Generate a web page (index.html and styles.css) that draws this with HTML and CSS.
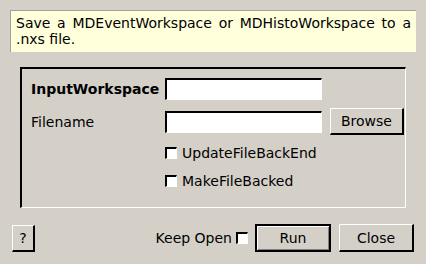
FILE: index.html
```html
<!DOCTYPE html>
<html lang="en">
<head>
  <meta charset="UTF-8">
  <title>SaveMD</title>
  <link rel="stylesheet" href="styles.css">
</head>
<body>
<div class="dialog">
  <div class="desc">Save a MDEventWorkspace or MDHistoWorkspace to a .nxs file.</div>

  <div class="group">
    <label class="lbl bold" for="ws">InputWorkspace</label>
    <input class="field" id="ws" type="text">
    <span></span>

    <label class="lbl" for="fn">Filename</label>
    <input class="field" id="fn" type="text">
    <button class="btn browse">Browse</button>

    <span></span>
    <label class="check"><span class="box"></span>UpdateFileBackEnd</label>
    <span></span>

    <span></span>
    <label class="check"><span class="box"></span>MakeFileBacked</label>
    <span></span>
  </div>

  <div class="footer">
    <button class="btn help">?</button>
    <div class="spacer"></div>
    <label class="keep">Keep Open <span class="box"></span></label>
    <button class="btn run">Run</button>
    <button class="btn close">Close</button>
  </div>
</div>
</body>
</html>
```

FILE: styles.css
```css
body {
  margin: 0;
  background-color: #d4d0c8;
  font-family: "DejaVu Sans", sans-serif;
  font-size: 14px;
  color: #000;
}

.dialog {
  width: 426px;
  height: 264px;
  display: flex;
  flex-direction: column;
}

.desc {
  margin: 10px 10px 0 10px;
  height: 42px;
  box-sizing: border-box;
  padding: 4px 5px 0 5px;
  background-color: #ffffdc;
  border-left: 1px solid #a0a0a0;
  border-top: 1px solid #a0a0a0;
  line-height: 16px;
  text-align: justify;
}

.group {
  margin: 15px 20px 0 20px;
  height: 141px;
  box-sizing: border-box;
  border-top: 2px solid #000;
  border-left: 2px solid #000;
  border-right: 1px solid #fff;
  border-bottom: 1px solid #fff;
  padding: 9px 0 0 9px;
  display: grid;
  grid-template-columns: 126px 157px 74px;
  grid-template-rows: 22px 27px 20px 20px;
  column-gap: 8px;
  row-gap: 8px;
  align-items: center;
}

.lbl {
  white-space: nowrap;
}

.bold {
  font-weight: bold;
}

.field {
  height: 22px;
  box-sizing: border-box;
  margin: 0;
  border-top: 2px solid #000;
  border-left: 2px solid #000;
  border-right: 1px solid #fff;
  border-bottom: 1px solid #fff;
  background-color: #fff;
}

.btn {
  font-family: "DejaVu Sans", sans-serif;
  font-size: 14px;
  color: #000;
  background-color: #d4d0c8;
  box-sizing: border-box;
  border-top: 1px solid #fff;
  border-left: 1px solid #fff;
  border-right: 2px solid #000;
  border-bottom: 2px solid #000;
  padding: 0;
  margin: 0;
}

.browse {
  height: 27px;
  width: 74px;
}

.check {
  display: flex;
  align-items: center;
  white-space: nowrap;
}

.box {
  display: inline-block;
  width: 12px;
  height: 12px;
  box-sizing: border-box;
  background-color: #fff;
  border-top: 2px solid #000;
  border-left: 2px solid #000;
  border-right: 1px solid #fff;
  border-bottom: 1px solid #fff;
  margin-right: 5px;
}

.footer {
  display: flex;
  align-items: center;
  margin: 16px 12px 0 12px;
  height: 28px;
}

.spacer {
  flex: 1;
}

.help {
  width: 23px;
  height: 27px;
}

.keep {
  display: flex;
  align-items: center;
  white-space: nowrap;
}

.keep .box {
  margin: 0 0 0 4px;
}

.run {
  width: 76px;
  height: 28px;
  margin-left: 7px;
  border: 2px solid #000;
  box-shadow: inset 1px 1px 0 #fff, inset -1px -1px 0 #808080;
}

.close {
  width: 75px;
  height: 28px;
  margin-left: 8px;
}
```
